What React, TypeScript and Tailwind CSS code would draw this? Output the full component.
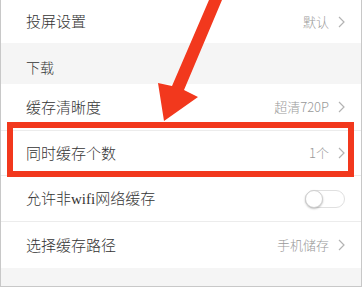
import React from 'react';

const Chevron = () => (
  <svg width="7" height="12" viewBox="0 0 7 12" className="ml-[9px]">
    <polyline points="1,1 6,6 1,11" fill="none" stroke="#b3b3b3" strokeWidth="1.2" />
  </svg>
);

const Row: React.FC<{ label: React.ReactNode; value?: string; h: string; toggle?: boolean; divider?: boolean }> = ({
  label,
  value,
  h,
  toggle,
  divider = true,
}) => (
  <div className={`flex items-center justify-between pl-[25px] pr-[16px] bg-white ${h} ${divider ? 'border-b border-[#ececec]' : ''}`}>
    <span className="text-[15px] font-light text-[#333]">{label}</span>
    {toggle ? (
      <div className="relative w-[40px] h-[18px] rounded-full border border-[#e0e0e0] bg-white">
        <div className="absolute left-[-1px] top-[-1px] w-[18px] h-[18px] rounded-full bg-white border border-[#cfcfcf] shadow-[0_1px_2px_rgba(0,0,0,0.25)]" />
      </div>
    ) : (
      <div className="flex items-center">
        <span className="text-[13px] font-light text-[#999]">{value}</span>
        <Chevron />
      </div>
    )}
  </div>
);

export default function App() {
  return (
    <div
      className="relative w-[362px] h-[287px] overflow-hidden bg-white border-l border-r border-b border-[#c8c8c8]"
      style={{ fontFamily: '"Noto Sans CJK SC", "Noto Sans", sans-serif' }}
    >
      <Row label="投屏设置" value="默认" h="h-[43px]" divider={false} />
      <div className="h-[41px] bg-[#f5f5f5] flex items-end pl-[25px] pb-[6px]">
        <span className="text-[14px] font-light text-[#333]">下载</span>
      </div>
      <Row label="缓存清晰度" value="超清720P" h="h-[47px]" />
      <Row label="同时缓存个数" value="1个" h="h-[45px]" />
      <Row
        label={
          <>
            允许非<span style={{ fontFamily: '"Liberation Serif", serif' }}>wifi</span>网络缓存
          </>
        }
        h="h-[46px]"
        toggle
      />
      <Row label="选择缓存路径" value="手机储存" h="h-[46px]" divider={false} />
      <div className="h-[18px] bg-[#f5f5f5]" />

      {/* red highlight box */}
      <div className="absolute left-[6px] top-[122px] w-[347px] h-[55px] border-[6px] border-[#f2381d]" />

      {/* arrow */}
      <svg className="absolute left-0 top-0" width="363" height="287" viewBox="0 0 363 287">
        <polygon
          points="208,0 221,0 183,90 197,97 163,121 157,83 171,86"
          fill="#f2381d"
        />
      </svg>
    </div>
  );
}
